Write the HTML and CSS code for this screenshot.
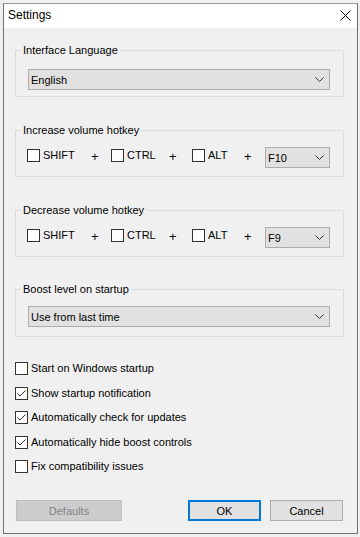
FILE: index.html
```html
<!DOCTYPE html>
<html lang="en">

<head>
  <meta charset="utf-8" />
  <meta name="viewport" content="width=device-width, initial-scale=1.0" />
  <title>Settings</title>
  <link rel="stylesheet" href="styles.css">
</head>

<body>
  <div class="window">
    <!-- Title Bar -->
    <div class="titlebar">
      <span class="title">Settings</span>
      <svg class="close" width="11" height="11" viewBox="0 0 11 11">
        <path d="M0.5 0.5 L10.5 10.5 M10.5 0.5 L0.5 10.5" stroke="#000" stroke-width="1" fill="none" />
      </svg>
    </div>

    <div class="content">
      <fieldset class="group group-first">
        <legend>Interface Language</legend>
        <div class="combo">
          <span>English</span>
          <svg class="chevron" width="9" height="5" viewBox="0 0 9 5"><path d="M0.5 0.5 L4.5 4.5 L8.5 0.5" stroke="#333" fill="none" /></svg>
        </div>
      </fieldset>

      <fieldset class="group">
        <legend>Increase volume hotkey</legend>
        <div class="hotkey-row">
          <label class="check key-shift"><span class="box"></span>SHIFT</label>
          <span class="plus plus-a">+</span>
          <label class="check key-ctrl"><span class="box"></span>CTRL</label>
          <span class="plus plus-b">+</span>
          <label class="check key-alt"><span class="box"></span>ALT</label>
          <span class="plus plus-c">+</span>
          <div class="combo combo-key">
            <span>F10</span>
            <svg class="chevron" width="9" height="5" viewBox="0 0 9 5"><path d="M0.5 0.5 L4.5 4.5 L8.5 0.5" stroke="#333" fill="none" /></svg>
          </div>
        </div>
      </fieldset>

      <fieldset class="group">
        <legend>Decrease volume hotkey</legend>
        <div class="hotkey-row">
          <label class="check key-shift"><span class="box"></span>SHIFT</label>
          <span class="plus plus-a">+</span>
          <label class="check key-ctrl"><span class="box"></span>CTRL</label>
          <span class="plus plus-b">+</span>
          <label class="check key-alt"><span class="box"></span>ALT</label>
          <span class="plus plus-c">+</span>
          <div class="combo combo-key">
            <span>F9</span>
            <svg class="chevron" width="9" height="5" viewBox="0 0 9 5"><path d="M0.5 0.5 L4.5 4.5 L8.5 0.5" stroke="#333" fill="none" /></svg>
          </div>
        </div>
      </fieldset>

      <fieldset class="group group-last">
        <legend>Boost level on startup</legend>
        <div class="combo">
          <span>Use from last time</span>
          <svg class="chevron" width="9" height="5" viewBox="0 0 9 5"><path d="M0.5 0.5 L4.5 4.5 L8.5 0.5" stroke="#333" fill="none" /></svg>
        </div>
      </fieldset>

      <!-- General options -->
      <div class="options">
        <label class="check"><span class="box"></span>Start on Windows startup</label>
        <label class="check"><span class="box"><svg width="11" height="11" viewBox="0 0 11 11"><path d="M1.5 5.5 L4 8 L9.5 2.5" stroke="#333" fill="none" /></svg></span>Show startup notification</label>
        <label class="check"><span class="box"><svg width="11" height="11" viewBox="0 0 11 11"><path d="M1.5 5.5 L4 8 L9.5 2.5" stroke="#333" fill="none" /></svg></span>Automatically check for updates</label>
        <label class="check"><span class="box"><svg width="11" height="11" viewBox="0 0 11 11"><path d="M1.5 5.5 L4 8 L9.5 2.5" stroke="#333" fill="none" /></svg></span>Automatically hide boost controls</label>
        <label class="check"><span class="box"></span>Fix compatibility issues</label>
      </div>

      <div class="buttons">
        <button class="btn btn-defaults" disabled>Defaults</button>
        <div class="btn-group">
          <button class="btn btn-ok">OK</button>
          <button class="btn">Cancel</button>
        </div>
      </div>
    </div>
  </div>
</body>

</html>
```

FILE: styles.css
```css
/* Global Reset */
* {
  margin: 0;
  padding: 0;
  box-sizing: border-box;
}

body {
  font-family: 'Liberation Sans', Arial, sans-serif;
  font-size: 11px;
  color: #000;
  background-color: #efefef;
  width: 360px;
  height: 537px;
  padding: 3px 2px 3px 3px;
}

/* Dialog Window */
.window {
  width: 355px;
  height: 531px;
  border: 1px solid #707070;
  border-top-color: #9a9a9a;
  background-color: #f0f0f0;
  display: flex;
  flex-direction: column;
}

.titlebar {
  height: 24px;
  background-color: #fff;
  display: flex;
  align-items: center;
  justify-content: space-between;
  padding: 0 6px 0 4px;
}

.title {
  font-size: 12px;
  line-height: 22px;
  padding-bottom: 2px;
}

.close {
  margin-top: -2px;
}

/* Main Content */
.content {
  flex: 1;
  display: flex;
  flex-direction: column;
  padding: 16px 13px 12px 11px;
}

.group {
  border: 1px solid #dcdcdc;
  padding: 10px 13px 8px 12px;
  margin-top: 27px;
}

.group-first {
  margin-top: 0;
  padding-top: 12px;
  padding-bottom: 6px;
}

.group-last {
  margin-top: 26px;
  padding-bottom: 9px;
}

.group legend {
  line-height: 13px;
  padding: 0 2px;
  margin-left: -7px;
}

/* Combo boxes */
.combo {
  height: 21px;
  background-color: #e1e1e1;
  border: 1px solid #adadad;
  display: flex;
  align-items: center;
  justify-content: space-between;
  padding: 0 5px 0 2px;
}

.combo-key {
  width: 65px;
}

.chevron {
  display: block;
}

/* Hotkey rows */
.hotkey-row {
  display: flex;
  align-items: flex-start;
  margin-left: -1px;
}

.hotkey-row .check {
  margin-top: 2px;
}

.key-shift { width: 64px; }
.key-ctrl { width: 58px; }
.key-alt { width: 52px; }

.plus {
  font-size: 13px;
  line-height: 13px;
  margin-top: 3px;
}

.plus-a { width: 20px; }
.plus-b { width: 23px; }
.plus-c { width: 21px; }

/* Checkboxes */
.check {
  display: flex;
  align-items: center;
  line-height: 13px;
  height: 13px;
  white-space: nowrap;
}

.box {
  width: 13px;
  height: 13px;
  border: 1px solid #333;
  background-color: #fff;
  margin-right: 3px;
  flex-shrink: 0;
}

.box svg {
  display: block;
}

.options {
  display: flex;
  flex-direction: column;
  gap: 11.6px;
  margin-top: 25px;
}

/* Buttons */
.buttons {
  margin-top: auto;
  display: flex;
  justify-content: space-between;
  padding: 0 1px;
}

.btn-group {
  display: flex;
  gap: 9px;
}

.btn {
  font-family: inherit;
  font-size: 11px;
  color: #000;
  height: 21px;
  width: 73px;
  background-color: #e1e1e1;
  border: 1px solid #adadad;
}

.btn-ok {
  border: 2px solid #0078d7;
}

.btn-defaults {
  width: 106px;
  background-color: #cccccc;
  border-color: #bfbfbf;
  color: #838383;
}
```
